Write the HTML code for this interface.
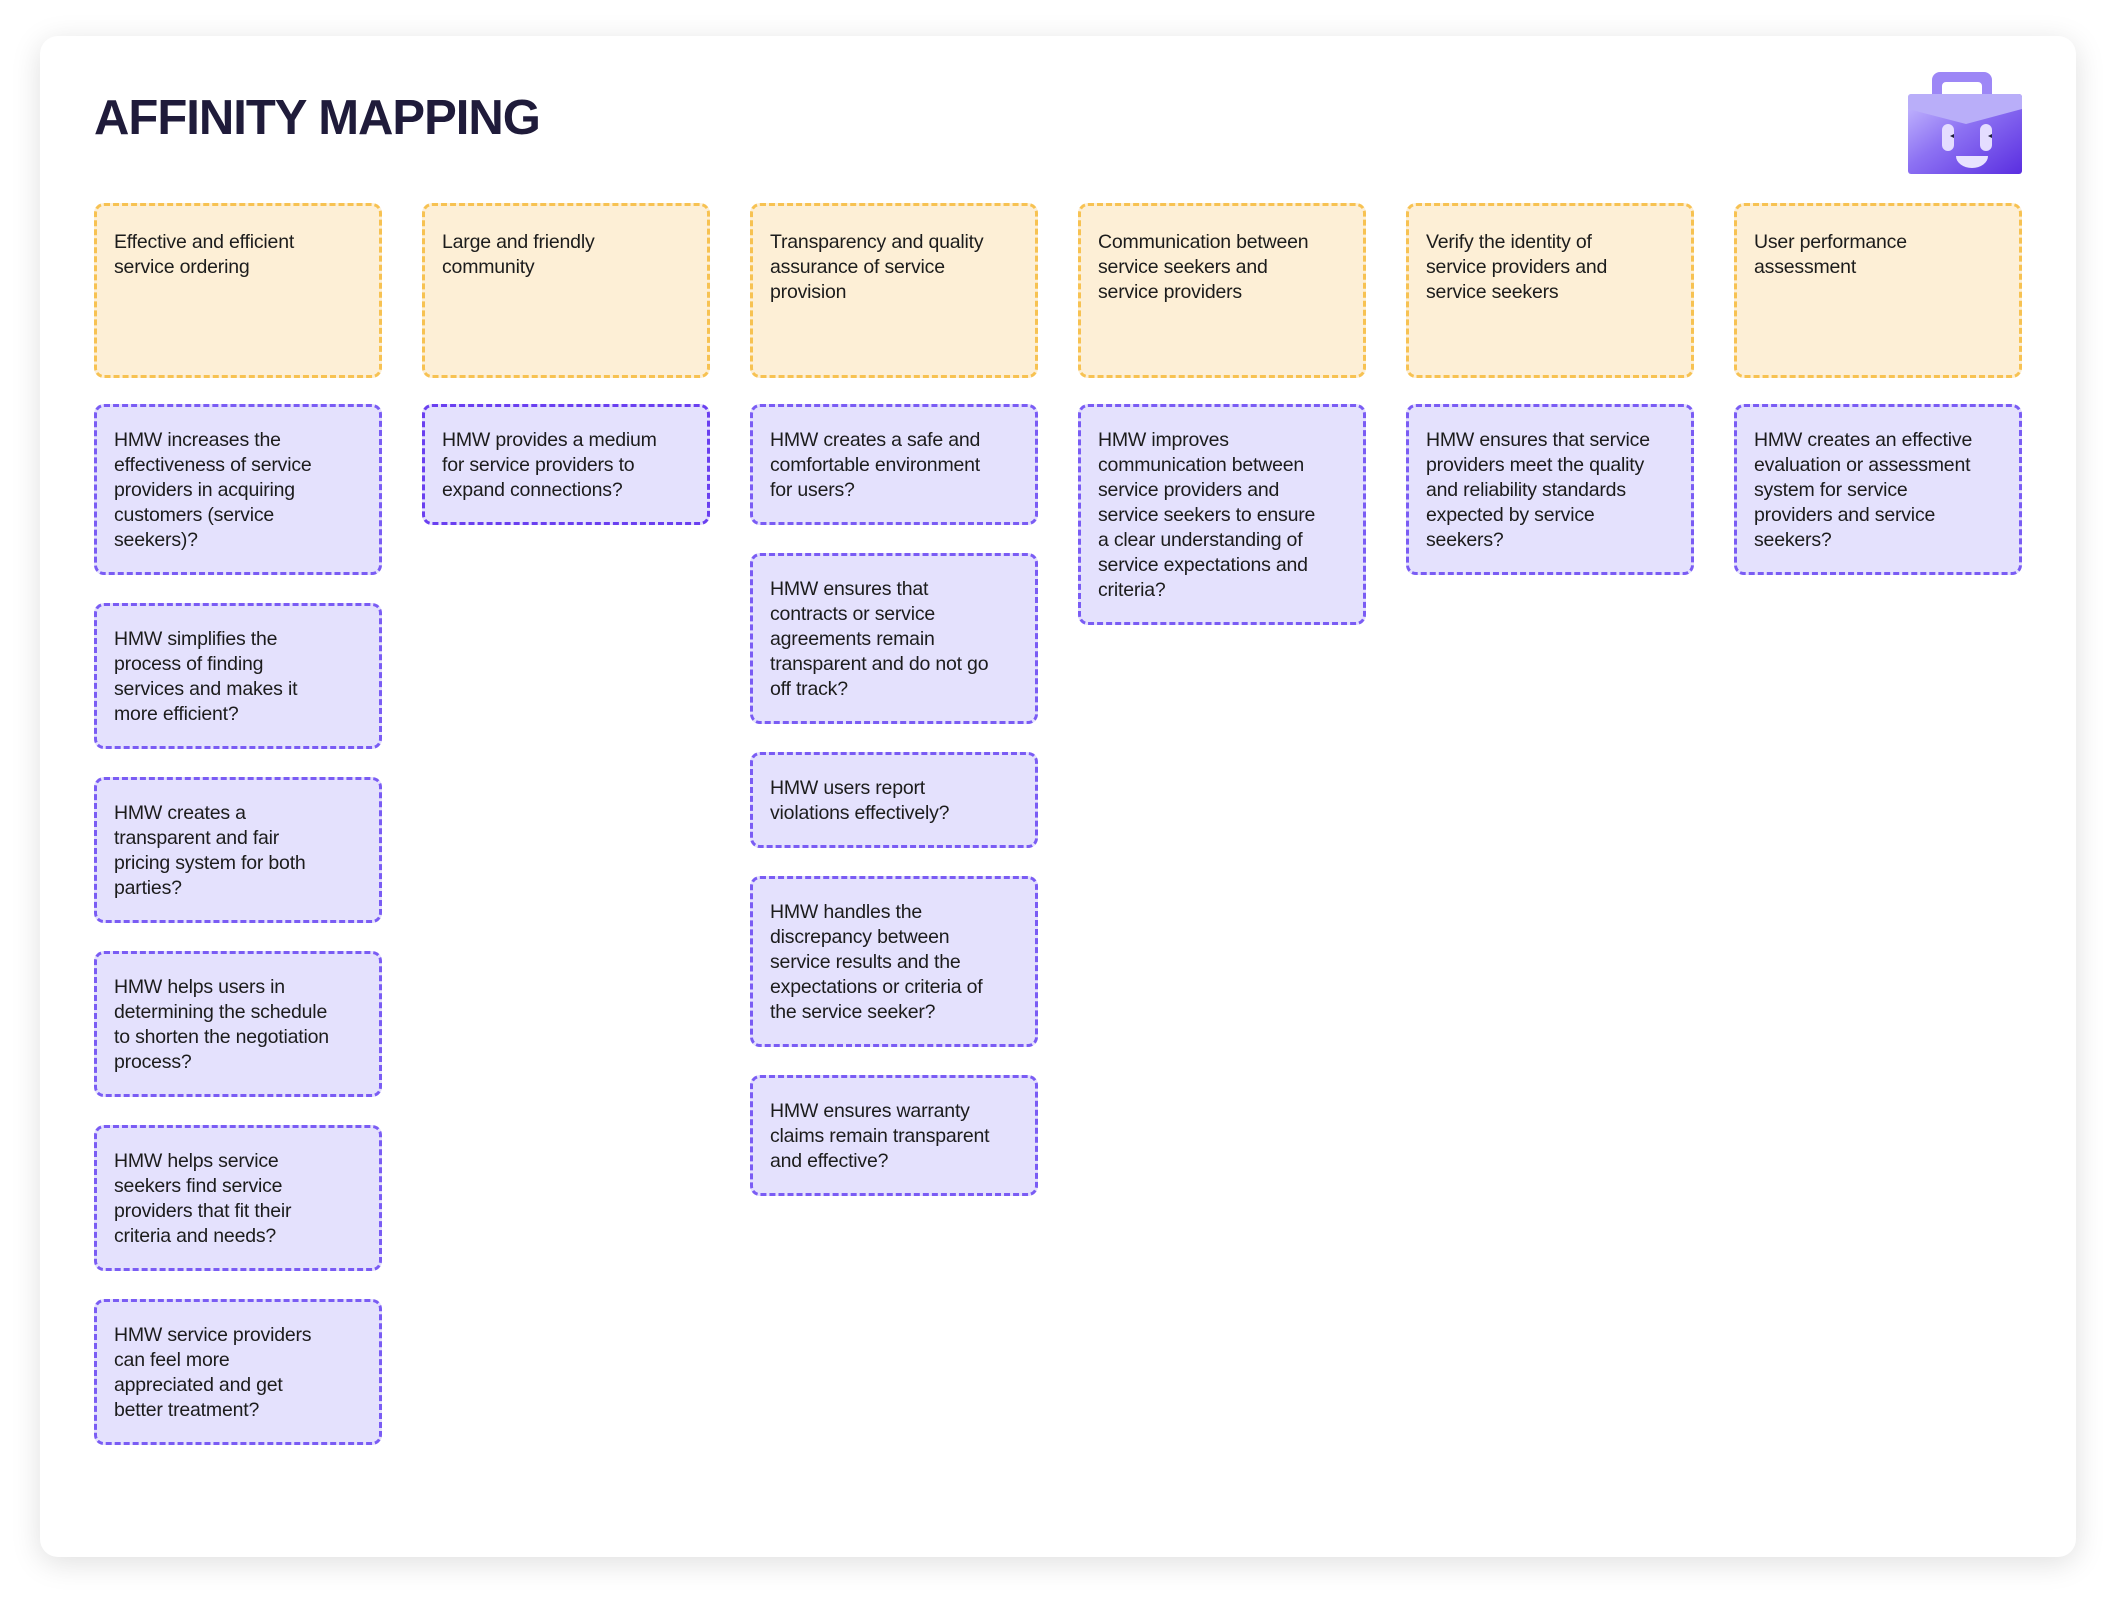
<!DOCTYPE html>
<html><head><meta charset="utf-8"><style>
*{margin:0;padding:0;box-sizing:border-box}
body{width:2116px;height:1602px;background:#fff;position:relative;overflow:hidden;font-family:"Liberation Sans",sans-serif}
.card{position:absolute;left:40px;top:36px;width:2036px;height:1521px;background:#fff;border-radius:18px;box-shadow:0 6px 30px rgba(0,0,0,.13)}
h1{position:absolute;left:94px;top:90px;font-size:49px;font-weight:bold;color:#1f1b3a;letter-spacing:-1px;line-height:56px}
.col{position:absolute;top:203px;width:288px}
.n{border-radius:10px;padding:21px 8px 19px 17px;font-size:19.5px;line-height:25px;color:#1c1c1c;white-space:nowrap;margin-bottom:28px;letter-spacing:-0.2px}
.h{background:#fdefd6;border:3px dashed #f7c252;height:175px;padding-top:24px;margin-bottom:26px}
.p{background:#e4e1fd;border:3px dashed #7a5cf4}
.icon{position:absolute;left:1906px;top:70px}
</style></head><body>
<div class="card"></div>
<h1>AFFINITY MAPPING</h1>
<svg class="icon" width="120" height="106" viewBox="0 0 120 106">
<defs>
<linearGradient id="g" x1="0" y1="0" x2="1" y2="1"><stop offset="0" stop-color="#c9bfff"/><stop offset=".45" stop-color="#8d72f3"/><stop offset="1" stop-color="#5a2ee0"/></linearGradient>
</defs>
<path d="M26 26 V10 a8 8 0 0 1 8 -8 h44 a8 8 0 0 1 8 8 V26 h-10 V16 a4 4 0 0 0 -4 -4 H40 a4 4 0 0 0 -4 4 V26 z" fill="#9d87f6"/>
<rect x="2" y="24" width="114" height="80" rx="3" fill="url(#g)"/>
<path d="M2 27 a3 3 0 0 1 3 -3 h108 a3 3 0 0 1 3 3 v12 L60 54 L2 39 z" fill="#b9aef9"/>
<rect x="36" y="54" width="12" height="27" rx="6" fill="#e4ddff"/>
<rect x="74" y="54" width="12" height="27" rx="6" fill="#e4ddff"/>
<path d="M44 66 l4 -2 v4z M82 66 l4 -2 v4z" fill="#1d1f3a"/>
<path d="M50 86 h32 a16 12 0 0 1 -32 0z" fill="#e8e2ff"/>
</svg>

<div class="col" style="left:94px">
<div class="n h">Effective and efficient<br>service ordering</div>
<div class="n p">HMW increases the<br>effectiveness of service<br>providers in acquiring<br>customers (service<br>seekers)?</div>
<div class="n p">HMW simplifies the<br>process of finding<br>services and makes it<br>more efficient?</div>
<div class="n p">HMW creates a<br>transparent and fair<br>pricing system for both<br>parties?</div>
<div class="n p">HMW helps users in<br>determining the schedule<br>to shorten the negotiation<br>process?</div>
<div class="n p">HMW helps service<br>seekers find service<br>providers that fit their<br>criteria and needs?</div>
<div class="n p">HMW service providers<br>can feel more<br>appreciated and get<br>better treatment?</div>
</div>

<div class="col" style="left:422px">
<div class="n h">Large and friendly<br>community</div>
<div class="n p" style="border-color:#6a3ff0">HMW provides a medium<br>for service providers to<br>expand connections?</div>
</div>

<div class="col" style="left:750px">
<div class="n h">Transparency and quality<br>assurance of service<br>provision</div>
<div class="n p">HMW creates a safe and<br>comfortable environment<br>for users?</div>
<div class="n p">HMW ensures that<br>contracts or service<br>agreements remain<br>transparent and do not go<br>off track?</div>
<div class="n p">HMW users report<br>violations effectively?</div>
<div class="n p">HMW handles the<br>discrepancy between<br>service results and the<br>expectations or criteria of<br>the service seeker?</div>
<div class="n p">HMW ensures warranty<br>claims remain transparent<br>and effective?</div>
</div>

<div class="col" style="left:1078px">
<div class="n h">Communication between<br>service seekers and<br>service providers</div>
<div class="n p">HMW improves<br>communication between<br>service providers and<br>service seekers to ensure<br>a clear understanding of<br>service expectations and<br>criteria?</div>
</div>

<div class="col" style="left:1406px">
<div class="n h">Verify the identity of<br>service providers and<br>service seekers</div>
<div class="n p">HMW ensures that service<br>providers meet the quality<br>and reliability standards<br>expected by service<br>seekers?</div>
</div>

<div class="col" style="left:1734px">
<div class="n h">User performance<br>assessment</div>
<div class="n p">HMW creates an effective<br>evaluation or assessment<br>system for service<br>providers and service<br>seekers?</div>
</div>
</body></html>
